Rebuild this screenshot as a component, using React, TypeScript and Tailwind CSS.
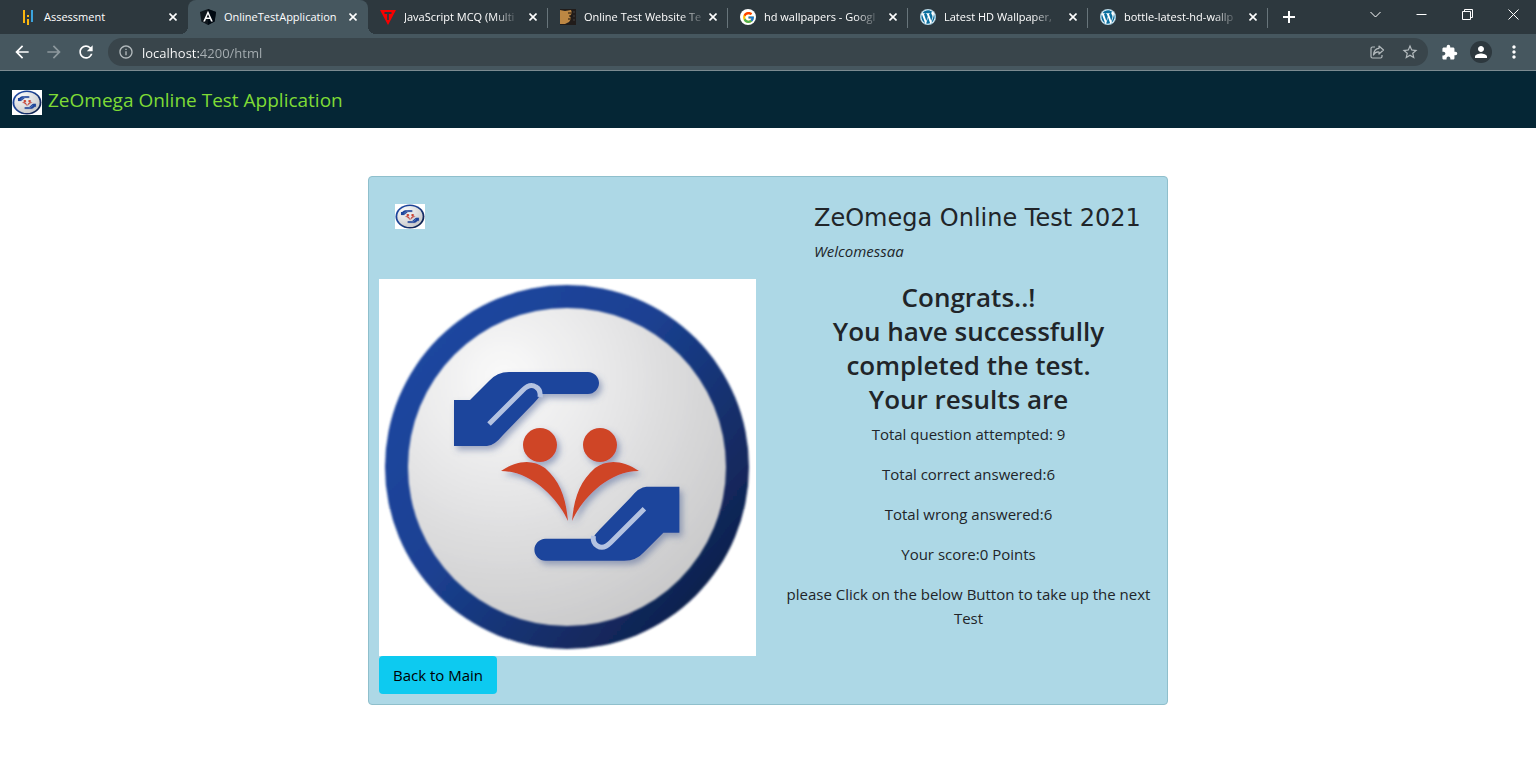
import { useId, type ReactNode } from "react";
import { FcGoogle } from "react-icons/fc";
import { FaWordpress } from "react-icons/fa";
import {
  MdArrowBack,
  MdArrowForward,
  MdExtension,
  MdMoreVert,
  MdOutlineInfo,
  MdPerson,
  MdRefresh,
  MdStarBorder,
} from "react-icons/md";

function HandsLogo({ className, label }: { className: string; label: string }) {
  const id = useId().replace(/[^a-zA-Z0-9]/g, "");
  const hand = (
    <>
      <path
        d="M75 121H91L110 102Q118 93 130 93H209C215 93 220 98 220 104C220 110 215 115 209 115H162Q159 120 155 124L124 156Q115 167 108 167H75Z"
        fill="#1d449c"
      />
      <path d="M110 145L144 111Q151 104 157 108Q162 111 161 118" fill="none" stroke="#b4c3e1" strokeWidth="5" />
    </>
  );
  return (
    <svg className={className} viewBox="0 0 377 377" preserveAspectRatio="none" role="img" aria-label={label}>
      <defs>
        <linearGradient id={`ring${id}`} x1="0.1" y1="0.2" x2="0.85" y2="0.85">
          <stop offset="0" stopColor="#1e469f" />
          <stop offset="0.4" stopColor="#1b4192" />
          <stop offset="1" stopColor="#10224f" />
        </linearGradient>
        <radialGradient id={`disc${id}`} cx="0.3" cy="0.22" r="0.9">
          <stop offset="0" stopColor="#fafafa" />
          <stop offset="0.4" stopColor="#e6e6e7" />
          <stop offset="1" stopColor="#c6c6c7" />
        </radialGradient>
        <filter id={`shade${id}`} x="-20%" y="-20%" width="140%" height="140%">
          <feDropShadow dx="3" dy="4" stdDeviation="3" floodColor="#4a5f94" floodOpacity="0.5" />
        </filter>
        <filter id={`soft${id}`}>
          <feGaussianBlur stdDeviation="1" />
        </filter>
      </defs>
      <rect width="377" height="377" fill="#fff" />
      <circle cx="188" cy="188" r="182" fill={`url(#ring${id})`} filter={`url(#soft${id})`} />
      <circle cx="188" cy="188" r="159" fill={`url(#disc${id})`} filter={`url(#soft${id})`} />
      <g filter={`url(#shade${id})`}>{hand}</g>
      <g filter={`url(#shade${id})`}>
        <g transform="rotate(180 187.700 187.400)">{hand}</g>
      </g>
      <g filter={`url(#shade${id})`} fill="#cf4527">
        <circle cx="161" cy="166" r="17" />
        <circle cx="221" cy="166" r="17" />
        <path d="M122 192C138 181 154 180 166 189C181 202 187 219 189 242C179 220 153 192 122 192Z" />
        <path d="M260 192C244 181 228 180 216 189C201 202 195 219 193 242C203 220 229 192 260 192Z" />
      </g>
    </svg>
  );
}

const favicon = "size-4 shrink-0";

type TabInfo = { title: string; icon: ReactNode; active?: boolean; faded?: boolean };

const tabs: TabInfo[] = [
  {
    title: "Assessment",
    icon: (
      <svg className={favicon} viewBox="0 0 16 16" fill="#fbb710">
        <path d="M3 1h2v13H3zM7 6h2v2H7zM7 10h2v6H7z" />
        <path d="M11 1h2v12h-2z" fill="#3ba3dd" />
      </svg>
    ),
  },
  {
    title: "OnlineTestApplication",
    active: true,
    icon: (
      <svg className={favicon} viewBox="0 0 16 16">
        <path d="M8 0L16 3L14.600 12.500L8 16L1.400 12.500L0 3Z" fill="#10171d" />
        <path d="M8 0L16 3L14.600 12.500L8 16Z" fill="#000912" />
        <path d="M8 1.800L3.200 12.500H5L6 10.100H10L11 12.500H12.800ZM8 5.200L9.400 8.600H6.600Z" fill="#fff" fillRule="evenodd" />
      </svg>
    ),
  },
  {
    title: "JavaScript MCQ (Multi",
    faded: true,
    icon: (
      <svg className={favicon} viewBox="0 0 16 16">
        <path d="M0 1H16L8 16Z" fill="#f70000" />
        <path d="M4.500 4H11.500M8 4V11" stroke="#2d383e" strokeWidth="1.800" />
      </svg>
    ),
  },
  {
    title: "Online Test Website Te",
    faded: true,
    icon: (
      <svg className={favicon} viewBox="0 0 16 16">
        <path d="M0 0H16V16H0Z" fill="#211c1a" />
        <path d="M0 1L5 2L11 1L12 4L10 7L11 10L9 13L5 15L0 15Z" fill="#bd8743" />
        <path d="M8 4H12M9 7H12M8 10H11" stroke="#21150c" />
        <path d="M14 2V14" stroke="#45403e" strokeDasharray="2 2" />
      </svg>
    ),
  },
  {
    title: "hd wallpapers - Googl",
    faded: true,
    icon: (
      <span className="flex size-4 shrink-0 items-center justify-center rounded-full bg-white">
        <FcGoogle size={13} />
      </span>
    ),
  },
  {
    title: "Latest HD Wallpaper,",
    faded: true,
    icon: (
      <span className="size-4 shrink-0 rounded-full bg-white text-[#0a6f9f]">
        <FaWordpress size={16} />
      </span>
    ),
  },
  {
    title: "bottle-latest-hd-wallp",
    faded: true,
    icon: (
      <span className="size-4 shrink-0 rounded-full bg-white text-[#0a6f9f]">
        <FaWordpress size={16} />
      </span>
    ),
  },
];

function Tab({ tab }: { tab: TabInfo }) {
  return (
    <div
      className={
        tab.active
          ? "relative flex h-[34px] w-[180px] min-w-0 items-center rounded-t-lg bg-[#46575f] pl-3 pr-[7px]"
          : "relative flex h-[34px] w-[180px] min-w-0 items-center pl-3 pr-[7px]"
      }
    >
      {tab.active && (
        <>
          <span className="absolute bottom-0 -left-2 size-2 bg-[radial-gradient(circle_at_0_0,transparent_8px,#46575f_8px)]" />
          <span className="absolute bottom-0 -right-2 size-2 bg-[radial-gradient(circle_at_100%_0,transparent_8px,#46575f_8px)]" />
        </>
      )}
      {tab.icon}
      <span className="ml-2 flex flex-1 whitespace-nowrap">
        <span className={tab.faded ? "[mask-image:linear-gradient(to_right,#000_82%,#0003)]" : ""}>{tab.title}</span>
      </span>
      <button type="button" aria-label={`Close ${tab.title}`} className="flex size-4 shrink-0 items-center justify-center">
        <svg className="size-2" viewBox="0 0 8 8" stroke="#fff" strokeWidth="1.600">
          <path d="M0.500 0.500L7.500 7.500M7.500 0.500L0.500 7.500" />
        </svg>
      </button>
      {tab.faded && <span className="absolute right-0 top-2 h-5 w-px bg-[#68757b]" />}
    </div>
  );
}

function WindowButton({ label, children }: { label: string; children: ReactNode }) {
  return (
    <button type="button" aria-label={label} className="flex h-7 w-[46px] items-center justify-center">
      <svg className="size-[11px]" viewBox="0 0 11 11" fill="none" stroke="#fff">
        {children}
      </svg>
    </button>
  );
}

function BrowserChrome() {
  return (
    <header className="text-white [font-family:'Open_Sans','Noto_Sans',sans-serif]">
      <div className="flex h-[34px] items-start bg-[#2d383e] pl-2 text-[11px]">
        {tabs.map((tab) => (
          <Tab key={tab.title} tab={tab} />
        ))}
        <button type="button" aria-label="New tab" className="ml-[11px] flex h-[34px] w-5 items-center justify-center">
          <svg className="size-3" viewBox="0 0 12 12" stroke="#fff" strokeWidth="2">
            <path d="M6 0V12M0 6H12" />
          </svg>
        </button>
        <div className="ml-auto flex">
          <WindowButton label="Search tabs">
            <path d="M0.500 3L5.500 8L10.500 3" />
          </WindowButton>
          <WindowButton label="Minimize">
            <path d="M0.500 5.500H10.500" />
          </WindowButton>
          <WindowButton label="Restore">
            <path d="M0.500 2.500H8.500V10.500H0.500ZM2.500 2.500V0.500H10.500V8.500H8.500" />
          </WindowButton>
          <WindowButton label="Close window">
            <path d="M0.500 0.500L10.500 10.500M10.500 0.500L0.500 10.500" />
          </WindowButton>
        </div>
      </div>
      <div className="flex h-[37px] items-center gap-3 border-b border-[#7c8b91] bg-[#46575f] px-3">
        <button type="button" aria-label="Back">
          <MdArrowBack size={20} />
        </button>
        <button type="button" aria-label="Forward" className="text-[#8d989d]">
          <MdArrowForward size={20} />
        </button>
        <button type="button" aria-label="Reload">
          <MdRefresh size={20} />
        </button>
        <div className="flex h-7 flex-1 items-center rounded-full bg-[#39454b] pl-[10px] pr-[9px] text-[#b4bbbe]">
          <MdOutlineInfo size={16} />
          <input
            type="text"
            aria-label="Address"
            defaultValue="localhost:4200/html"
            className="ml-2 min-w-0 flex-1 bg-[linear-gradient(to_right,#fff_57px,#a7afb3_57px)] bg-clip-text pt-0.5 text-[13px] text-transparent outline-none"
          />
          <button type="button" aria-label="Share" className="mr-4">
            <svg className="size-4" viewBox="0 0 16 16" fill="none" stroke="currentColor" strokeWidth="1.200">
              <path d="M6 3H3.500Q2 3 2 4.500V12.500Q2 14 3.500 14H11.500Q13 14 13 12.500V11" />
              <path d="M10 2L14.500 6L10 10V8Q6.500 7.500 4.500 11Q5 4.500 10 4.300Z" strokeLinejoin="round" />
            </svg>
          </button>
          <button type="button" aria-label="Bookmark this page">
            <MdStarBorder size={18} />
          </button>
        </div>
        <div className="flex items-center gap-3">
          <button type="button" aria-label="Extensions" className="ml-px">
            <MdExtension size={17} />
          </button>
          <button type="button" aria-label="Profile" className="flex size-[22px] items-center justify-center rounded-full bg-[#2d383e]">
            <MdPerson size={18} />
          </button>
          <button type="button" aria-label="Menu">
            <MdMoreVert size={20} />
          </button>
        </div>
      </div>
    </header>
  );
}

const results = [
  "Total question attempted: 9",
  "Total correct answered:6",
  "Total wrong answered:6",
  "Your score:0 Points",
  "please Click on the below Button to take up the next Test",
];

export default function App() {
  return (
    <div className="min-h-screen bg-white text-[15px] leading-6 text-[#212529] [font-family:'Open_Sans','Noto_Sans',sans-serif]">
      <BrowserChrome />
      <nav className="flex h-[57px] items-center bg-[#052635] px-3">
        <a href="#home" className="flex items-center gap-[6px] text-[19px] text-[#7fdb35]">
          <HandsLogo className="mt-[6px] h-[25px] w-[30px]" label="ZeOmega" />
          ZeOmega Online Test Application
        </a>
      </nav>
      <main className="mx-auto mt-12 max-w-[800px] rounded border border-[#8fbfcc] bg-[#add8e6] p-[10px]">
        <div className="flex justify-between px-4 pt-4">
          <HandsLogo className="mt-px h-[25px] w-[30px]" label="ZeOmega" />
          <div className="w-[327px]">
            <h1 className="whitespace-nowrap text-2xl leading-[30px] [font-family:'DejaVu_Sans',Verdana,sans-serif]">
              ZeOmega Online Test 2021
            </h1>
            <p className="mt-[6px] italic">Welcomessaa</p>
          </div>
        </div>
        <div className="mt-4 grid grid-cols-2 gap-6">
          <HandsLogo className="aspect-square w-full" label="ZeOmega emblem" />
          <section className="text-center">
            <h2 className="mb-[6px] mt-px text-[26px] font-semibold leading-[34px]">
              Congrats..!
              <br />
              You have successfully
              <br />
              completed the test.
              <br />
              Your results are
            </h2>
            {results.map((line) => (
              <p key={line} className="mb-4">
                {line}
              </p>
            ))}
          </section>
        </div>
        <button type="button" className="block h-[38px] rounded bg-[#0dcaf0] px-[14px] text-black">
          Back to Main
        </button>
      </main>
    </div>
  );
}
